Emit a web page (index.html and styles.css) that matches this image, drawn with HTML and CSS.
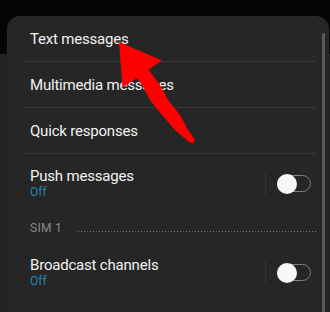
FILE: index.html
```html
<!DOCTYPE html>
<html lang="en">
<head>
<meta charset="utf-8">
<title>Message settings</title>
<link rel="stylesheet" href="styles.css">
</head>
<body>
<div class="sheet">
  <ul class="list">
    <li class="row single"><span class="title">Text messages</span></li>
    <li class="row single"><span class="title">Multimedia messages</span></li>
    <li class="row single"><span class="title">Quick responses</span></li>
    <li class="row double">
      <div class="texts">
        <span class="title">Push messages</span>
        <span class="sub">Off</span>
      </div>
      <div class="switch-wrap"><div class="track"><div class="knob"></div></div></div>
    </li>
    <li class="section">
      <span class="section-label">SIM 1</span>
      <span class="dots"></span>
    </li>
    <li class="row double last">
      <div class="texts">
        <span class="title">Broadcast channels</span>
        <span class="sub">Off</span>
      </div>
      <div class="switch-wrap"><div class="track"><div class="knob"></div></div></div>
    </li>
  </ul>
  <div class="scrollbar"></div>
</div>
<svg class="arrow" width="330" height="312" viewBox="0 0 330 312" aria-hidden="true">
  <polygon fill="#ff0000" points="119,42 162,60.5 148.5,69.7 160,85 168,100 180,115 188,130 195,139.5 193,143.5 189,142 175,130 162,115 150,100 142,85 136.7,78.3 122.5,87.5"/>
</svg>
</body>
</html>
```

FILE: styles.css
```css
html, body {
  margin: 0;
  padding: 0;
}
body {
  width: 330px;
  height: 312px;
  overflow: hidden;
  position: relative;
  background: linear-gradient(#050505 0 54px, #232323 54px);
  font-family: Roboto, "Liberation Sans", sans-serif;
}
.sheet {
  margin: 16px 1px 0 7px;
  min-height: 296px;
  background: #262626;
  border-radius: 13px 13px 0 0;
  display: flex;
}
.list {
  list-style: none;
  margin: 0 0 0 17px;
  padding: 0;
  width: 292px;
}
.row {
  display: flex;
  align-items: center;
  padding: 0 5px 0 6px;
  border-bottom: 1px solid #383838;
}
.row.single {
  height: 45px;
}
.row.double {
  padding-top: 13px;
  padding-bottom: 11px;
  border-bottom: none;
}
.texts {
  flex: 1;
  display: flex;
  flex-direction: column;
}
.title {
  font-size: 15px;
  line-height: 18px;
  letter-spacing: -0.2px;
  color: #f2f2f2;
}
.sub {
  font-size: 12px;
  line-height: 15px;
  color: #2a84ab;
}
.switch-wrap {
  border-left: 1px solid #363636;
  height: 23px;
  padding-left: 11px;
  display: flex;
  align-items: center;
}
.track {
  box-sizing: border-box;
  width: 34px;
  height: 17px;
  border: 1.5px solid #808080;
  border-radius: 9px;
  display: flex;
  align-items: center;
}
.knob {
  flex-shrink: 0;
  width: 20px;
  height: 20px;
  margin-left: -1.5px;
  border-radius: 50%;
  background: #f7f7f7;
}
.section {
  display: flex;
  align-items: flex-start;
  padding: 10px 0 7px 6px;
}
.section-label {
  font-size: 12px;
  line-height: 15px;
  color: #8a8a8a;
  letter-spacing: 0.3px;
}
.dots {
  flex: 1;
  height: 1px;
  margin: 10px 0 0 16px;
  background-image: linear-gradient(to right, #7a7a7a 1.4px, transparent 1.4px);
  background-size: 3px 1px;
}
.scrollbar {
  width: 3px;
  margin: 17px 4px 0 6px;
  background: #5a5a5a;
  border-radius: 2px 2px 0 0;
}
.arrow {
  position: absolute;
  left: 0;
  top: 0;
}
```
